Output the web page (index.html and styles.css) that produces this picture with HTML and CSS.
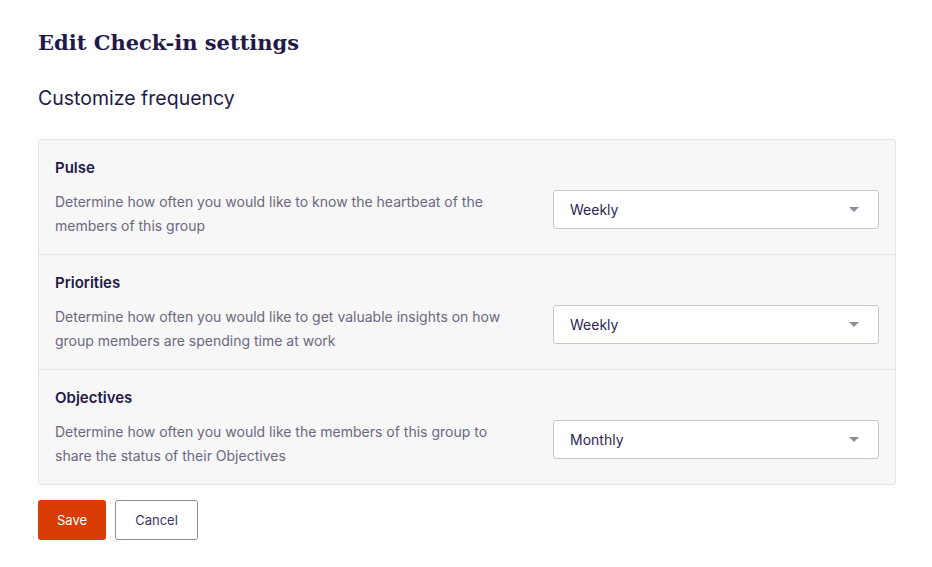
FILE: index.html
```html
<!DOCTYPE html>
<html lang="en">
<head>
  <meta charset="UTF-8">
  <meta name="viewport" content="width=device-width, initial-scale=1.0">
  <title>Edit Check-in settings</title>
  <link rel="stylesheet" href="styles.css">
</head>
<body>
  <div class="settings-page">
    <h1 class="page-title">Edit Check-in settings</h1>
    <h2 class="section-title">Customize frequency</h2>

    <div class="frequency-card">
      <div class="frequency-row">
        <div class="row-label">Pulse</div>
        <div class="row-body">
          <p class="row-desc">Determine how often you would like to know the heartbeat of the members of this group</p>
          <div class="select-box">
            <span>Weekly</span>
            <span class="caret"></span>
          </div>
        </div>
      </div>
      <div class="frequency-row">
        <div class="row-label">Priorities</div>
        <div class="row-body">
          <p class="row-desc">Determine how often you would like to get valuable insights on how group members are spending time at work</p>
          <div class="select-box">
            <span>Weekly</span>
            <span class="caret"></span>
          </div>
        </div>
      </div>
      <div class="frequency-row">
        <div class="row-label">Objectives</div>
        <div class="row-body">
          <p class="row-desc">Determine how often you would like the members of this group to share the status of their Objectives</p>
          <div class="select-box">
            <span>Monthly</span>
            <span class="caret"></span>
          </div>
        </div>
      </div>
    </div>

    <div class="actions">
      <button class="save-button">Save</button>
      <button class="cancel-button">Cancel</button>
    </div>
  </div>
</body>
</html>
```

FILE: styles.css
```css
body {
  margin: 0;
  padding: 0;
  background: #ffffff;
  font-family: 'Inter', 'Noto Sans', sans-serif;
  color: #1f1a47;
}

.settings-page {
  padding: 27px 36px 0 38px;
}

.page-title {
  margin: 0;
  font-family: 'DejaVu Serif', serif;
  font-size: 21px;
  font-weight: bold;
  line-height: 32px;
  color: #1f1a47;
}

.section-title {
  margin: 26px 0 0;
  font-size: 19.5px;
  font-weight: normal;
  line-height: 26px;
  color: #1f1a47;
}

.frequency-card {
  margin-top: 28px;
  background: #f7f7f7;
  border: 1px solid #e4e4e6;
  border-radius: 3px;
}

.frequency-row {
  padding: 18px 16px 16px 16px;
  border-top: 1px solid #e4e4e6;
}

.frequency-row:first-child {
  border-top: none;
}

.row-label {
  font-size: 15px;
  font-weight: 600;
  line-height: 20px;
  color: #1f1a47;
}

.row-body {
  display: flex;
  justify-content: space-between;
  align-items: flex-start;
  margin-top: 12px;
}

.row-desc {
  margin: 0;
  max-width: 450px;
  font-size: 14px;
  line-height: 24px;
  color: #6b6880;
}

.select-box {
  display: flex;
  justify-content: space-between;
  align-items: center;
  box-sizing: border-box;
  width: 326px;
  height: 39px;
  margin-top: 0;
  padding: 0 16px;
  background: #ffffff;
  border: 1px solid #c8c6d4;
  border-radius: 3px;
  font-size: 14px;
  color: #2b2652;
}

.caret {
  width: 0;
  height: 0;
  margin-right: 3px;
  border-left: 5px solid transparent;
  border-right: 5px solid transparent;
  border-top: 5px solid #8e8ba0;
}

.actions {
  display: flex;
  gap: 9px;
  margin-top: 15px;
}

.save-button,
.cancel-button {
  height: 40px;
  border-radius: 3px;
  font-family: 'Inter', 'Noto Sans', sans-serif;
  font-size: 13px;
  cursor: pointer;
}

.save-button {
  width: 68px;
  background: #d93c05;
  border: none;
  color: #ffffff;
}

.cancel-button {
  width: 83px;
  background: #ffffff;
  border: 1px solid #8e8ba3;
  color: #3a3562;
}
```
